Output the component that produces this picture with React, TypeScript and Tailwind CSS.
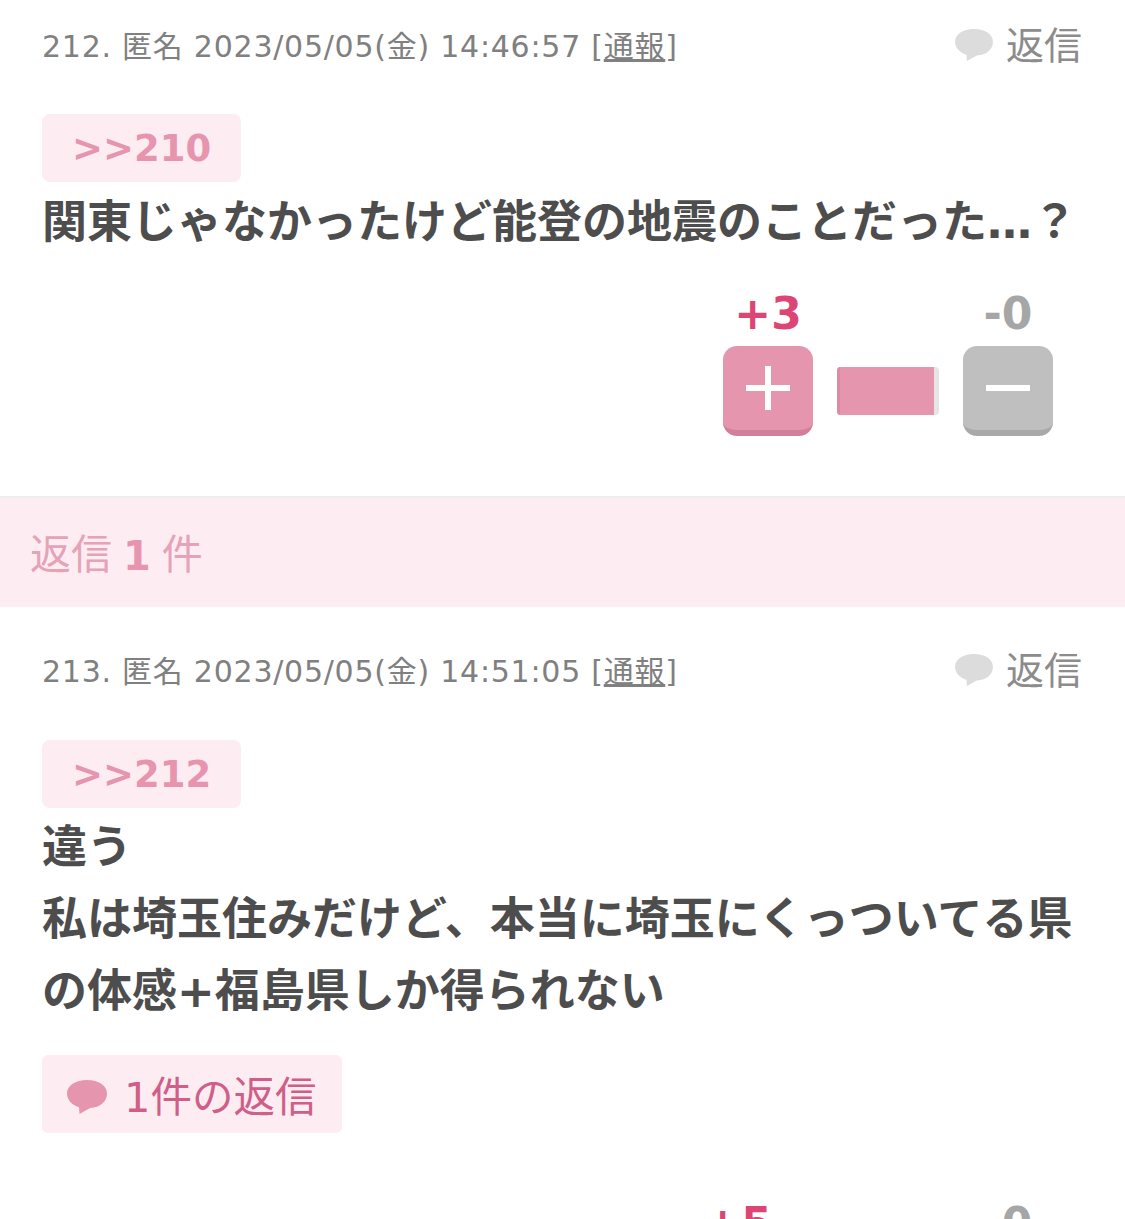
const font = "font-['DejaVu_Sans','Noto_Sans_CJK_JP',sans-serif]";

function Bubble({ className }: { className: string }) {
  return (
    <svg viewBox="0 0 42 38" className={className} fill="currentColor">
      <path d="M21 2C9.500 2 1 7.500 1 15.500c0 6.500 5 11.500 12 13.800L13.500 36l10.500-6C34.500 29.500 41 23.500 41 15.500 41 7.500 32.500 2 21 2z" />
    </svg>
  );
}

function Meta({ no, time }: { no: number; time: string }) {
  return (
    <div className="flex items-center justify-between pl-[42px] pr-[43px]">
      <p className="mt-[2px] text-[30px] leading-[40px] text-[#808080] tracking-[0.75px]">
        {no}. 匿名 2023/05/05(金) {time} [<span className="underline">通報</span>]
      </p>
      <div className="flex items-center gap-[12px] text-[38px] leading-[48px] text-[#8c8c8c]">
        <Bubble className="w-[40px] h-[36px] text-[#dcdcdc] -mt-[2px]" />
        <span>返信</span>
      </div>
    </div>
  );
}

function Anchor({ to }: { to: number }) {
  return (
    <div className="flex items-center justify-center w-[199px] h-[68px] pt-[2px] rounded-[8px] bg-[#fdedf3] text-[37px] font-bold text-[#e795ae]">
      &gt;&gt;{to}
    </div>
  );
}

function Votes({ plus, minus, barWidth, fillWidth }: { plus: number; minus: number; barWidth: string; fillWidth: string }) {
  return (
    <div className="flex justify-end pr-[72px]">
      <div className="flex flex-col items-center w-[90px]">
        <span className="pt-[1px] text-[44px] leading-[45px] font-bold whitespace-nowrap text-[#dd4674]">+{plus}</span>
        <button className="flex items-center justify-center w-[90px] h-[90px] rounded-[14px] bg-[#e595ad] border-b-[6px] border-[#d37f99] mt-[10px] text-white">
          <svg viewBox="0 0 44 44" className="w-[44px] h-[44px]" fill="currentColor">
            <rect x="19" y="0" width="6" height="44" />
            <rect x="0" y="19" width="44" height="6" />
          </svg>
        </button>
      </div>
      <div className={`self-end h-[48px] mx-[24px] mb-[21px] rounded-[4px] bg-[#e5e5e5] overflow-hidden ${barWidth}`}>
        <div className={`h-full bg-[#e595ad] border-l-[3px] border-[#dd8ba5] ${fillWidth}`} />
      </div>
      <div className="flex flex-col items-center w-[90px]">
        <span className="pt-[1px] text-[44px] leading-[45px] font-bold whitespace-nowrap text-[#a6a6a6]">-{minus}</span>
        <button className="flex items-center justify-center w-[90px] h-[90px] rounded-[14px] bg-[#bfbfbf] border-b-[6px] border-[#a9a9a9] mt-[10px] text-white">
          <svg viewBox="0 0 44 44" className="w-[44px] h-[44px]" fill="currentColor">
            <rect x="0" y="19" width="44" height="6" />
          </svg>
        </button>
      </div>
    </div>
  );
}

export default function App() {
  return (
    <div className={`h-[1219px] overflow-hidden bg-white ${font}`}>
      <section className="pt-[22px]">
        <Meta no={212} time="14:46:57" />
        <div className="pl-[42px] mt-[44px]">
          <Anchor to={210} />
          <p className="mt-[5px] text-[45px] leading-[72px] font-bold text-[#4d4d4d] whitespace-nowrap">
            関東じゃなかったけど能登の地震のことだった…？
          </p>
        </div>
        <div className="mt-[31px]">
          <Votes plus={3} minus={0} barWidth="w-[102px]" fillWidth="w-[97px]" />
        </div>
      </section>

      <div className="mt-[60px] h-[111px] pt-[6px] border-t-2 border-[#eeeeee] bg-[#fdedf3] pl-[30px] flex items-center text-[41px] text-[#e6a3b8]">
        返信 <span className="mx-[11px] font-bold text-[#e795ae] text-[40px]">1</span> 件
      </div>

      <section className="pt-[40px]">
        <Meta no={213} time="14:51:05" />
        <div className="pl-[42px] mt-[45px]">
          <Anchor to={212} />
          <p className="mt-[4px] text-[45px] leading-[72px] font-bold text-[#4d4d4d]">
            違う
            <br />
            私は埼玉住みだけど、本当に埼玉にくっついてる県
            <br />
            の体感+福島県しか得られない
          </p>
          <div className="mt-[27px] flex items-center w-[300px] h-[78px] pt-[5px] rounded-[6px] bg-[#fdedf3] pl-[24px] text-[41.5px] text-[#cf5f88]">
            <Bubble className="w-[42px] h-[38px] mr-[16px] text-[#e595ad]" />
            <span className="pt-[3px]">1件の返信</span>
          </div>
        </div>
        <div className="mt-[67px]">
          <Votes plus={5} minus={0} barWidth="w-[132px]" fillWidth="w-[127px]" />
        </div>
      </section>
    </div>
  );
}
